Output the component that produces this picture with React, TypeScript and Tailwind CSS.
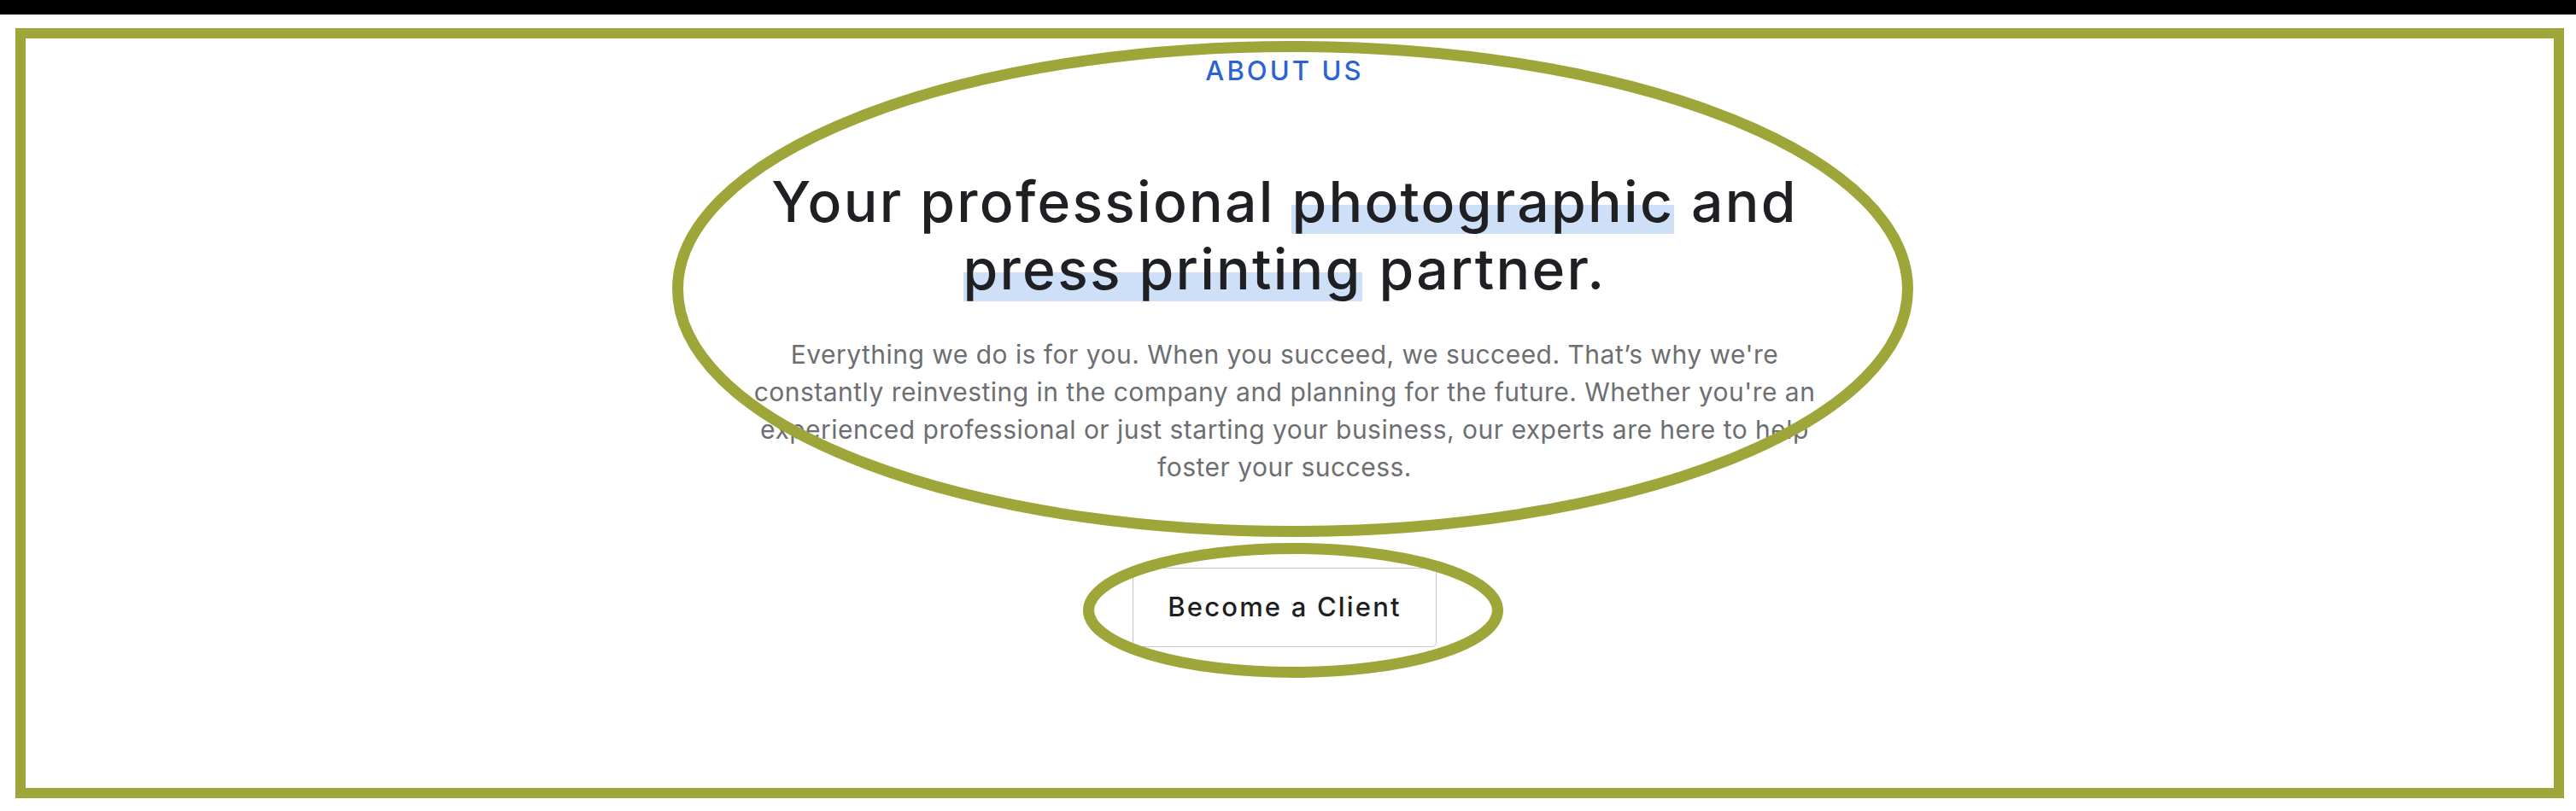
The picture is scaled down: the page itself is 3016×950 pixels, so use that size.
export default function App() {
  const hl =
    "bg-[linear-gradient(to_bottom,transparent_55%,#cedff8_55%,#cedff8_97%,transparent_97%)]";
  return (
    <div className="relative w-full h-[950px] bg-white overflow-hidden font-['Inter',sans-serif]">
      <div className="h-[17px] bg-black" />
      <section className="flex flex-col items-center pr-2 pt-[47px]">
        <p className="text-[31px] leading-[37px] tracking-[0.1em] font-medium text-[#2c62d8]">ABOUT US</p>
        <h1 className="mt-[96px] text-[66px] leading-[79px] font-medium text-[#1f2023] text-center tracking-[0.034em]">
          Your professional <span className={hl}>photographic</span> and
          <br />
          <span className={hl}>press printing</span> partner.
        </h1>
        <p className="mt-[38px] w-[1290px] text-center text-[30px] leading-[44px] tracking-[0.016em] text-[#6d6e72]">
          Everything we do is for you. When you succeed, we succeed. That’s why we're constantly reinvesting in the
          company and planning for the future. Whether you're an experienced professional or just starting your
          business, our experts are here to help foster your success.
        </p>
        <button className="mt-[96px] h-[93px] w-[356px] rounded-[5px] border-[1.5px] border-[#c9c9c9] bg-white text-[31px] font-medium tracking-[0.07em] text-[#1f1f1f]">
          Become a Client
        </button>
      </section>

      <div className="pointer-events-none absolute left-[18px] top-[33px] w-[2984px] h-[902px] border-[12px] border-[#9ea639]" />
      <svg className="pointer-events-none absolute inset-0" width="3016" height="950" viewBox="0 0 3016 950" fill="none">
        <ellipse cx="1513.5" cy="338.5" rx="720" ry="284" stroke="#9ea639" strokeWidth="13" />
        <ellipse cx="1514" cy="715" rx="239.5" ry="72.5" stroke="#9ea639" strokeWidth="13" />
      </svg>
    </div>
  );
}
